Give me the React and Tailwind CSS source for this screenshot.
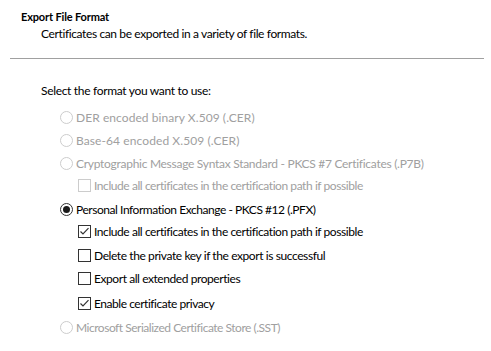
import React from "react";

const font = { fontFamily: 'Lato, "Noto Sans", sans-serif' };

function Radio({ checked, disabled }) {
  return (
    <svg width="13" height="13" viewBox="0 0 13 13" className="shrink-0">
      <circle cx="6.5" cy="6.5" r="6" fill="#fff" stroke={disabled ? "#cccccc" : "#333333"} strokeWidth="1" />
      {checked && <circle cx="6.5" cy="6.5" r="3.5" fill="#1a1a1a" />}
    </svg>
  );
}

function Check({ checked, disabled }) {
  return (
    <svg width="13" height="13" viewBox="0 0 13 13" className="shrink-0">
      <rect x="0.5" y="0.5" width="12" height="12" fill="#fff" stroke={disabled ? "#cccccc" : "#333333"} strokeWidth="1" />
      {checked && <path d="M2.5 6.5 L5 9 L10.5 3.2" fill="none" stroke="#333333" strokeWidth="1.2" />}
    </svg>
  );
}

function RadioRow({ label, checked, disabled, cls }) {
  return (
    <div className={`flex items-center pl-[60px] h-[21px] ${cls}`}>
      <Radio checked={checked} disabled={disabled} />
      <span className={`ml-[3px] text-[12px] ${disabled ? "text-[#a0a0a0]" : "text-black"}`}>{label}</span>
    </div>
  );
}

function CheckRow({ label, checked, disabled, cls }) {
  return (
    <div className={`flex items-center pl-[78px] h-[21px] ${cls}`}>
      <Check checked={checked} disabled={disabled} />
      <span className={`ml-[3px] text-[12px] ${disabled ? "text-[#a0a0a0]" : "text-black"}`}>{label}</span>
    </div>
  );
}

export default function App() {
  return (
    <div className="w-[491px] h-[351px] bg-white overflow-hidden" style={font}>
      <div className="pt-[9px] pl-[21px] text-[11px] font-bold text-black leading-[16px] tracking-[-0.15px]">Export File Format</div>
      <div className="pl-[41px] text-[12px] text-black leading-[16px] mt-[1px] tracking-[-0.38px]">
        Certificates can be exported in a variety of file formats.
      </div>
      <div className="ml-[10px] mr-[7px] mt-[16px] border-t border-[#a0a0a0]" />
      <div className="pl-[41px] mt-[24px] text-[12px] text-black leading-[16px] tracking-[-0.32px]">Select the format you want to use:</div>
      <div className="flex flex-col mt-[8px]">
        <RadioRow label="DER encoded binary X.509 (.CER)" disabled cls="tracking-[0.07px]" />
        <RadioRow label="Base-64 encoded X.509 (.CER)" disabled cls="mt-[2px] tracking-[0.09px]" />
        <RadioRow label="Cryptographic Message Syntax Standard - PKCS #7 Certificates (.P7B)" disabled cls="mt-[2px] tracking-[-0.28px]" />
        <CheckRow label="Include all certificates in the certification path if possible" disabled cls="mt-[1px] tracking-[-0.43px]" />
        <RadioRow label="Personal Information Exchange - PKCS #12 (.PFX)" checked cls="mt-[3px] tracking-[-0.45px]" />
        <CheckRow label="Include all certificates in the certification path if possible" checked cls="mt-[1px] tracking-[-0.43px]" />
        <CheckRow label="Delete the private key if the export is successful" cls="mt-[3px] tracking-[-0.41px]" />
        <CheckRow label="Export all extended properties" cls="mt-[2px] tracking-[-0.43px]" />
        <CheckRow label="Enable certificate privacy" checked cls="mt-[4px] tracking-[-0.46px]" />
        <RadioRow label="Microsoft Serialized Certificate Store (.SST)" disabled cls="mt-[3px] tracking-[-0.48px]" />
      </div>
    </div>
  );
}
